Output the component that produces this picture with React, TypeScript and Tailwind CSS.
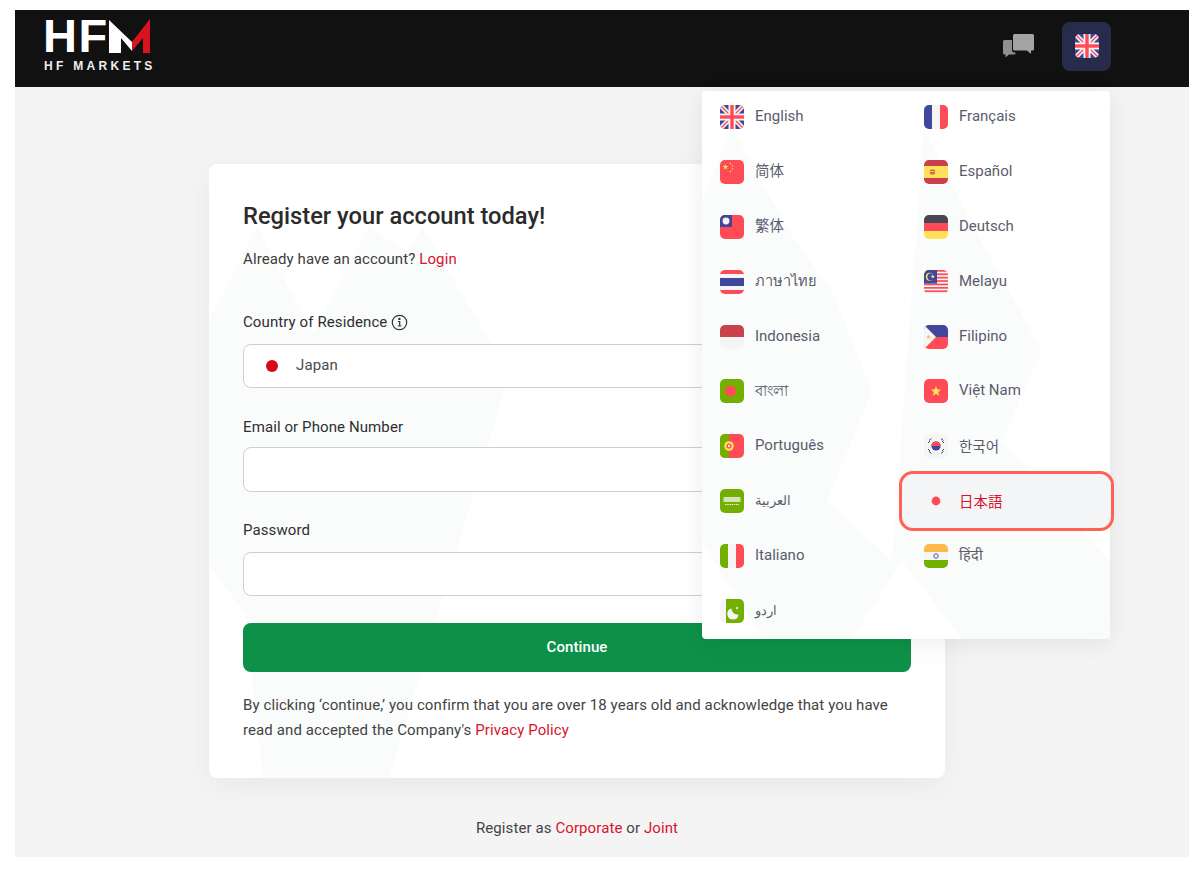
import React from "react";

const Star = ({ cx, cy, r, fill }: { cx: number; cy: number; r: number; fill: string }) => {
  const pts = Array.from({ length: 10 }, (_, i) => {
    const a = -Math.PI / 2 + (i * Math.PI) / 5;
    const rr = i % 2 === 0 ? r : r * 0.42;
    return `${cx + rr * Math.cos(a)},${cy + rr * Math.sin(a)}`;
  }).join(" ");
  return <polygon points={pts} fill={fill} />;
};

const R = "#ff4b55", B = "#41479b", G = "#73af00", W = "#f5f5f5", Y = "#ffe15a", O = "#ffb84d", DR = "#c8414b";

const uk = (
  <>
    <rect width="24" height="24" fill={B} />
    <path d="M0 0L24 24M24 0L0 24" stroke={W} strokeWidth="4.5" />
    <path d="M0 0L24 24M24 0L0 24" stroke={R} strokeWidth="1.4" />
    <rect x="8.5" width="7" height="24" fill={W} />
    <rect y="8.5" width="24" height="7" fill={W} />
    <rect x="10.3" width="3.4" height="24" fill={R} />
    <rect y="10.3" width="24" height="3.4" fill={R} />
  </>
);

const flags: Record<string, React.ReactNode> = {
  en: uk,
  cn: (
    <>
      <rect width="24" height="24" fill={R} />
      <Star cx={5.5} cy={7} r={3} fill={Y} />
      <circle cx="10.5" cy="3.5" r="0.8" fill={Y} />
      <circle cx="12.5" cy="6" r="0.8" fill={Y} />
      <circle cx="12.5" cy="9" r="0.8" fill={Y} />
      <circle cx="10.5" cy="11.5" r="0.8" fill={Y} />
    </>
  ),
  tw: (
    <>
      <rect width="24" height="24" fill={R} />
      <rect width="12" height="12" fill={B} />
      <circle cx="6" cy="6" r="3.4" fill={W} />
    </>
  ),
  th: (
    <>
      <rect width="24" height="24" fill={R} />
      <rect y="4" width="24" height="16" fill={W} />
      <rect y="8" width="24" height="8" fill={B} />
    </>
  ),
  id: (
    <>
      <rect width="24" height="12" fill={DR} />
      <rect y="12" width="24" height="12" fill={W} />
    </>
  ),
  bd: (
    <>
      <rect width="24" height="24" fill={G} />
      <circle cx="10.5" cy="12" r="5.6" fill={R} />
    </>
  ),
  pt: (
    <>
      <rect width="24" height="24" fill={R} />
      <rect width="9" height="24" fill={G} />
      <circle cx="9" cy="12" r="4.8" fill={Y} />
      <circle cx="9" cy="12" r="2.6" fill={R} />
      <circle cx="9" cy="12" r="1.2" fill={W} />
    </>
  ),
  sa: (
    <>
      <rect width="24" height="24" fill={G} />
      <rect x="3.5" y="8" width="17" height="5" fill={W} opacity="0.75" />
      <path d="M5 15.5H19" stroke={W} strokeWidth="1" strokeDasharray="1.4 0.8" />
    </>
  ),
  it: (
    <>
      <rect width="8" height="24" fill={G} />
      <rect x="8" width="8" height="24" fill={W} />
      <rect x="16" width="8" height="24" fill={R} />
    </>
  ),
  ur: (
    <>
      <rect width="6" height="24" fill={W} />
      <rect x="6" width="18" height="24" fill={G} />
      <path d="M18.5 15.5A6 6 0 0 1 11.5 9.6 5.6 5.6 0 1 0 18.5 15.5Z" fill={W} />
      <Star cx={17} cy={9} r={1.8} fill={W} />
    </>
  ),
  fr: (
    <>
      <rect width="8" height="24" fill={B} />
      <rect x="8" width="8" height="24" fill={W} />
      <rect x="16" width="8" height="24" fill={R} />
    </>
  ),
  es: (
    <>
      <rect width="24" height="24" fill={DR} />
      <rect y="6" width="24" height="12" fill={Y} />
      <rect x="6" y="9.5" width="5" height="5" rx="1" fill={DR} opacity="0.75" />
      <rect x="5" y="11" width="7" height="1" fill={O} />
    </>
  ),
  de: (
    <>
      <rect width="24" height="8" fill="#464655" />
      <rect y="8" width="24" height="8" fill={R} />
      <rect y="16" width="24" height="8" fill={Y} />
    </>
  ),
  my: (
    <>
      <rect width="24" height="24" fill={W} />
      {[0, 3.4, 6.8, 10.2, 13.6, 17, 20.4].map((y) => (
        <rect key={y} y={y} width="24" height="1.7" fill={R} />
      ))}
      <rect width="13" height="13.6" fill={B} />
      <circle cx="5.8" cy="6.8" r="4" fill={Y} />
      <circle cx="7" cy="6.8" r="3.6" fill={B} />
      <Star cx={8.8} cy={6.6} r={2.3} fill={Y} />
    </>
  ),
  ph: (
    <>
      <rect width="24" height="12" fill={B} />
      <rect y="12" width="24" height="12" fill={R} />
      <polygon points="0,0 12,12 0,24" fill={W} />
      <Star cx={4.5} cy={12} r={2.4} fill={O} />
    </>
  ),
  vn: (
    <>
      <rect width="24" height="24" fill={R} />
      <Star cx={12} cy={12.4} r={5.4} fill={Y} />
    </>
  ),
  kr: (
    <>
      <rect width="24" height="24" fill={W} />
      <circle cx="12" cy="12" r="4.6" fill={B} />
      <path d="M7.4 12A4.6 4.6 0 0 1 16.6 12Z" fill={R} />
      <path d="M5 6.5L7.5 4.5M4 9L6 7M17 4.5L19.5 6.5M18 7L20 9M5 17.5L7.5 19.5M4 15L6 17M17 19.5L19.5 17.5M18 17L20 15" stroke="#464655" strokeWidth="1" />
    </>
  ),
  jp: (
    <>
      <rect width="24" height="24" fill={W} />
      <circle cx="12" cy="12" r="4.4" fill={R} />
    </>
  ),
  in: (
    <>
      <rect width="24" height="8" fill={O} />
      <rect y="8" width="24" height="8" fill={W} />
      <rect y="16" width="24" height="8" fill={G} />
      <circle cx="12" cy="12" r="2.2" fill="none" stroke={B} strokeWidth="0.9" />
    </>
  ),
};

const Flag = ({ code }: { code: string }) => (
  <span className="block w-6 h-6 shrink-0 rounded-[5px] overflow-hidden">
    <svg viewBox="0 0 24 24" width="24" height="24" className="block">
      {flags[code]}
    </svg>
  </span>
);

const LATIN = "text-[15px] mb-[2px]";
const OTHER = "text-[14.5px]";
const rows: { code: string; label: string; size: string }[] = [
  { code: "en", label: "English", size: LATIN },
  { code: "fr", label: "Français", size: LATIN },
  { code: "cn", label: "简体", size: OTHER },
  { code: "es", label: "Español", size: LATIN },
  { code: "tw", label: "繁体", size: OTHER },
  { code: "de", label: "Deutsch", size: LATIN },
  { code: "th", label: "ภาษาไทย", size: OTHER },
  { code: "my", label: "Melayu", size: LATIN },
  { code: "id", label: "Indonesia", size: LATIN },
  { code: "ph", label: "Filipino", size: LATIN },
  { code: "bd", label: "বাংলা", size: "text-[15px]" },
  { code: "vn", label: "Việt Nam", size: LATIN },
  { code: "pt", label: "Português", size: LATIN },
  { code: "kr", label: "한국어", size: OTHER },
  { code: "sa", label: "العربية", size: "text-[12.5px]" },
  { code: "jp", label: "日本語", size: OTHER },
  { code: "it", label: "Italiano", size: LATIN },
  { code: "in", label: "हिंदी", size: OTHER },
  { code: "ur", label: "اردو", size: "text-[13px]" },
];

const Peaks = ({ w, h, d }: { w: number; h: number; d: string }) => (
  <svg className="absolute inset-0 pointer-events-none" width={w} height={h} viewBox={`0 0 ${w} ${h}`} fill="#fafbfb">
    <path d={d} />
  </svg>
);

const Field = ({ children, h, mt }: { children?: React.ReactNode; h: string; mt: string }) => (
  <div className={`${h} ${mt} w-full rounded-lg border border-[#cfcfcf] bg-white flex items-center`}>{children}</div>
);

export default function App() {
  return (
    <div className="w-[1200px] h-[880px] bg-white pt-[10px] pl-[15px] overflow-hidden relative font-['Roboto','Noto_Sans_CJK_SC',sans-serif]">
      <div className="w-[1174px] h-[847px] bg-[#f4f4f4] relative">
        <header className="h-[77px] bg-[#111111] flex items-center relative">
          <div className="ml-[28px] mt-[-7px] flex flex-col w-[112px]">
            <div className="flex items-end h-[36px]">
              <span className="text-white font-bold text-[47px] leading-[36px] tracking-[1.5px] font-['Liberation_Sans',sans-serif]">HF</span>
              <svg width="43" height="36" viewBox="0 0 43 36" className="ml-[-1px]">
                <polygon points="1,2 24,24 24,33 13,20 13,35 1,35" fill="#ffffff" />
                <polygon points="4,1 24,24 42,1 42,35 35,35 35,20 24,33 24,24" fill="#d9121f" />
              </svg>
            </div>
            <span className="mt-[6px] ml-[1px] text-[#eeeeee] font-bold text-[12px] leading-[12px] tracking-[3.3px] whitespace-nowrap font-['Liberation_Sans',sans-serif]">HF MARKETS</span>
          </div>
          <div className="ml-auto mr-[78px] mt-[-5px] flex items-center">
            <svg width="32" height="24" viewBox="0 0 32 24" className="mr-[28px]">
              <path d="M1 7.5a1.5 1.5 0 0 1 1.5-1.5H10v10.5a2 2 0 0 0 2 2h1.5V19a1.5 1.5 0 0 1-1.5 1.5H7l-3.5 3V20.5H2.5A1.5 1.5 0 0 1 1 19Z" fill="#8f8f8f" />
              <path d="M11 1.5A1.5 1.5 0 0 1 12.5 0h18A1.5 1.5 0 0 1 32 1.5V15a1.5 1.5 0 0 1-1.5 1.5H29V20l-4-3.5H12.5A1.5 1.5 0 0 1 11 15Z" fill="#a3a3a3" />
            </svg>
            <div className="w-[49px] h-[49px] rounded-lg bg-[#272c4d] flex items-center justify-center">
              <Flag code="en" />
            </div>
          </div>
        </header>

        <div className="w-[736px] ml-[194px] mt-[77px]">
          <div className="relative bg-white rounded-lg pt-[38px] pb-[35px] pl-[34px] pr-[34px] h-[614px] shadow-[0_8px_30px_rgba(0,0,0,0.05)] overflow-hidden tracking-[0.1px]">
            <Peaks w={736} h={614} d="M0 156L48 63 104 170 160 63 196 88 214 63 300 210 180 614 54 614 36 450 0 400Z" />
            <div className="relative">
              <h1 className="h-[28px] text-[23.7px] leading-[28px] font-medium text-[#2b2b2b] tracking-normal">Register your account today!</h1>
              <p className="mt-[19px] h-[20px] text-[15px] leading-[20px] text-[#3d3d3d]">
                Already have an account? <span className="text-[#d7142c]">Login</span>
              </p>
              <div className="mt-[43px] h-[20px] flex items-center gap-[4px] text-[15px] text-[#2f2f2f]">
                <span>Country of Residence</span>
                <svg width="17" height="17" viewBox="0 0 17 17" fill="none" stroke="#333" strokeWidth="1.2">
                  <circle cx="8.5" cy="8.5" r="7.2" />
                  <path d="M7 7.5H8.7V12M6.8 12H10.4" />
                  <circle cx="8.4" cy="4.9" r="0.6" fill="#333" />
                </svg>
              </div>
              <Field h="h-[44px]" mt="mt-[12px]">
                <span className="ml-[22px] w-[12px] h-[12px] rounded-full bg-[#d60a17]" />
                <span className="ml-[18px] mb-[2px] text-[15px] text-[#4a4a4a]">Japan</span>
              </Field>
              <div className="mt-[29px] h-[20px] text-[15px] leading-[20px] text-[#2f2f2f]">Email or Phone Number</div>
              <Field h="h-[45px]" mt="mt-[10px]" />
              <div className="mt-[28px] h-[20px] text-[15px] leading-[20px] text-[#2f2f2f]">Password</div>
              <Field h="h-[44px]" mt="mt-[12px]" />
              <button className="mt-[27px] w-full h-[49px] rounded-lg bg-[#0d9148] text-white text-[15px] font-medium">Continue</button>
              <p className="mt-[21px] text-[15px] leading-[25px] text-[#444444]">
                By clicking ‘continue,’ you confirm that you are over 18 years old and acknowledge that you have read and accepted the Company's{" "}
                <span className="text-[#d7142c]">Privacy Policy</span>
              </p>
            </div>
          </div>
          <p className="mt-[40px] h-[20px] text-center text-[15px] leading-[20px] text-[#444444] tracking-[0.1px]">
            Register as <span className="text-[#d7142c]">Corporate</span> or <span className="text-[#d7142c]">Joint</span>
          </p>
        </div>

        {/* language menu */}
        <div className="absolute left-[687px] top-[81px] w-[408px] h-[548px] bg-white rounded-[4px] shadow-[0_4px_24px_rgba(0,0,0,0.08)]">
          <div className="absolute inset-0 overflow-hidden rounded-[4px]">
            <Peaks w={408} h={548} d="M0 110L30 37 90 145 130 200 170 300 125 410 190 470 222 37 268 130 340 260 300 350 408 470 408 548 260 548 200 470 150 548 60 548 0 450Z" />
          </div>
          <div className="relative grid grid-cols-[204px_204px] gap-y-[30.9px] pt-[14px]">
            {rows.map((r) => {
              const active = r.code === "jp";
              return (
                <div key={r.code} className="relative h-6 pl-[18px] flex items-center gap-[11px]">
                  {active && (
                    <div className="absolute left-[-7px] top-[-18px] w-[215px] h-[60px] rounded-[14px] border-[3px] border-[#ff6252] bg-[#f4f5f6]" />
                  )}
                  <span className="relative"><Flag code={r.code} /></span>
                  <span
                    className={`relative ${r.size} leading-[20px] whitespace-nowrap ${
                      active ? "text-[#d7142c]" : "text-[#5a5c6c]"
                    } ${r.code === "kr" ? "font-['Noto_Sans_CJK_KR',sans-serif]" : r.code === "jp" ? "font-['Noto_Sans_CJK_JP',sans-serif]" : ""}`}
                  >
                    {r.label}
                  </span>
                </div>
              );
            })}
          </div>
        </div>
      </div>
    </div>
  );
}
